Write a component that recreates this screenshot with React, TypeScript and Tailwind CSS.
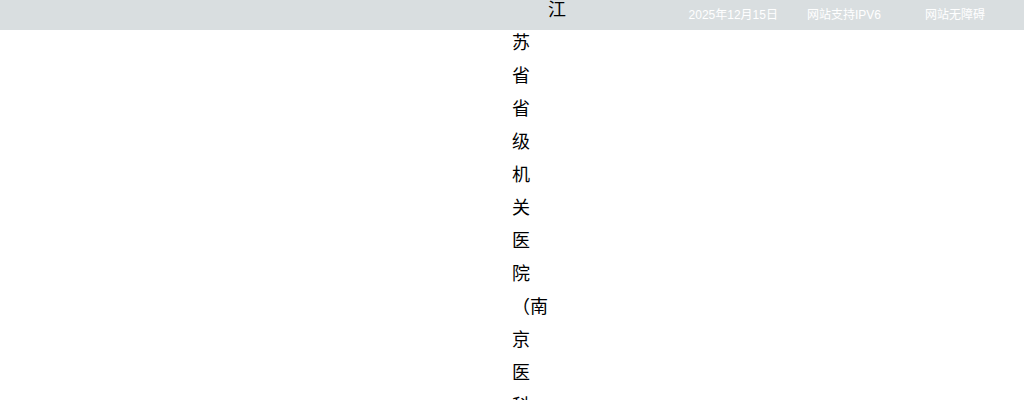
export default function App() {
  const title = "江苏省省级机关医院（南京医科大学附属老年医院）";

  return (
    <div className="min-h-screen bg-white font-['Liberation_Sans','Noto_Sans_CJK_SC',sans-serif]">
      {/* TOP BAR */}
      <div className="h-[30px] bg-[#d9dee0] flex items-center justify-end pr-[39px] text-[12px] text-white">
        <span>2025年12月15日</span>
        <span className="ml-[29px]">网站支持IPV6</span>
        <span className="ml-[44px]">网站无障碍</span>
      </div>

      {/* TITLE (squeezed column) */}
      <div className="ml-[512px] -mt-[36px] w-[30px] indent-[2em] text-[18px] leading-[33px] text-black">
        {title}
      </div>
    </div>
  );
}
